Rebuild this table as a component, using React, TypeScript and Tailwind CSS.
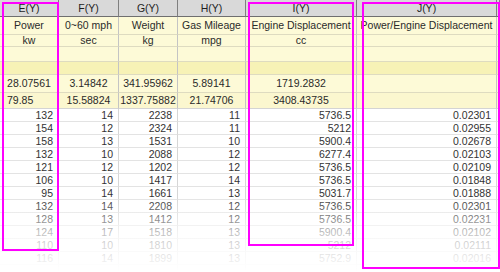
const widths = ["w-[59px]", "w-[60px]", "w-[59px]", "w-[68px]", "w-[111px]", "w-[140px]", "w-[3px]"];

const headers = ["E(Y)", "F(Y)", "G(Y)", "H(Y)", "I(Y)", "J(Y)", ""];
const longNames = ["Power", "0~60 mph", "Weight", "Gas Mileage", "Engine Displacement", "Power/Engine Displacement", ""];
const units = ["kw", "sec", "kg", "mpg", "cc", "", ""];
const stats1 = ["28.07561", "3.14842", "341.95962", "5.89141", "1719.2832", "", ""];
const stats2 = ["79.85", "15.58824", "1337.75882", "21.74706", "3408.43735", "", ""];

const rows: string[][] = [
  ["132", "14", "2238", "11", "5736.5", "0.02301"],
  ["154", "12", "2324", "11", "5212", "0.02955"],
  ["158", "13", "1531", "10", "5900.4", "0.02678"],
  ["132", "10", "2088", "12", "6277.4", "0.02103"],
  ["121", "12", "1202", "12", "5736.5", "0.02109"],
  ["106", "10", "1417", "14", "5736.5", "0.01848"],
  ["95", "14", "1661", "13", "5031.7", "0.01888"],
  ["132", "14", "2208", "12", "5736.5", "0.02301"],
  ["128", "13", "1412", "12", "5736.5", "0.02231"],
  ["124", "17", "1518", "13", "5900.4", "0.02102"],
  ["110", "10", "1810", "13", "5212", "0.02111"],
  ["116", "14", "1899", "13", "5752.9", "0.02016"],
  ["", "", "", "", "", ""],
];

function LabelRow({ cells, height, bg }: { cells: string[]; height: string; bg: string }) {
  return (
    <div className={`flex ${height} ${bg}`}>
      {cells.map((c, i) => (
        <div
          key={i}
          className={`${widths[i]} shrink-0 flex items-center justify-center border-r border-b border-r-[#c4c4c4] border-b-[#dedbc0] overflow-hidden whitespace-nowrap`}
        >
          {c}
        </div>
      ))}
    </div>
  );
}

export default function App() {
  return (
    <div
      className="relative w-[500px] h-[272px] overflow-hidden bg-white text-[10.5px] leading-none text-[#2a2a2a]"
      style={{ fontFamily: '"Liberation Sans", Arial, sans-serif' }}
    >
      {/* Column headers */}
      <div className="flex h-[17px] bg-[#d9d9d9]">
        {headers.map((h, i) => (
          <div
            key={i}
            className={`${widths[i]} shrink-0 flex items-center justify-center border-r border-b border-r-[#7f7f7f] border-b-[#6f6f6f] text-[#1e1e1e]`}
          >
            {h}
          </div>
        ))}
      </div>

      {/* Label rows */}
      <LabelRow cells={longNames} height="h-[18px]" bg="bg-[#fdfad7]" />
      <LabelRow cells={units} height="h-[12px]" bg="bg-[#fdfad7]" />
      <LabelRow cells={["", "", "", "", "", "", ""]} height="h-[15px]" bg="bg-[#fdfad7]" />
      <LabelRow cells={["", "", "", "", "", "", ""]} height="h-[13px]" bg="bg-[#f7f2b6]" />
      <LabelRow cells={stats1} height="h-[18px]" bg="bg-[#fdfad7]" />
      <div className="flex h-[16px] bg-[#fbf7cf]">
        {stats2.map((c, i) => (
          <div
            key={i}
            className={`${widths[i]} shrink-0 flex items-center ${i === 0 ? "justify-start pl-[7px]" : "justify-center"} border-r border-b border-r-[#c4c4c4] border-b-[#d4d4d4] whitespace-nowrap`}
          >
            {c}
          </div>
        ))}
      </div>

      {/* Data rows */}
      {rows.map((r, ri) => (
        <div key={ri} className="flex h-[13px]">
          {[...r, ""].map((c, i) => (
            <div
              key={i}
              className={`${widths[i]} shrink-0 flex items-center justify-end pr-[5px] border-r border-b border-r-[#d6d6d6] border-b-[#e3e3e3] text-[#333]`}
            >
              {c}
            </div>
          ))}
        </div>
      ))}

      {/* Fade out at the bottom */}
      <div className="absolute left-0 right-0 top-[196px] h-[76px] bg-gradient-to-b from-white/0 via-white/70 to-white pointer-events-none" />

      {/* Highlight boxes */}
      <div className="absolute left-[2px] top-[2px] w-[57px] h-[249px] border-2 border-[#ff00ff] pointer-events-none" />
      <div className="absolute left-[248px] top-[2px] w-[106px] h-[244px] border-2 border-[#ff00ff] pointer-events-none" />
      <div className="absolute left-[362px] top-[2px] w-[138px] h-[267px] border-2 border-[#ff00ff] pointer-events-none" />
    </div>
  );
}
